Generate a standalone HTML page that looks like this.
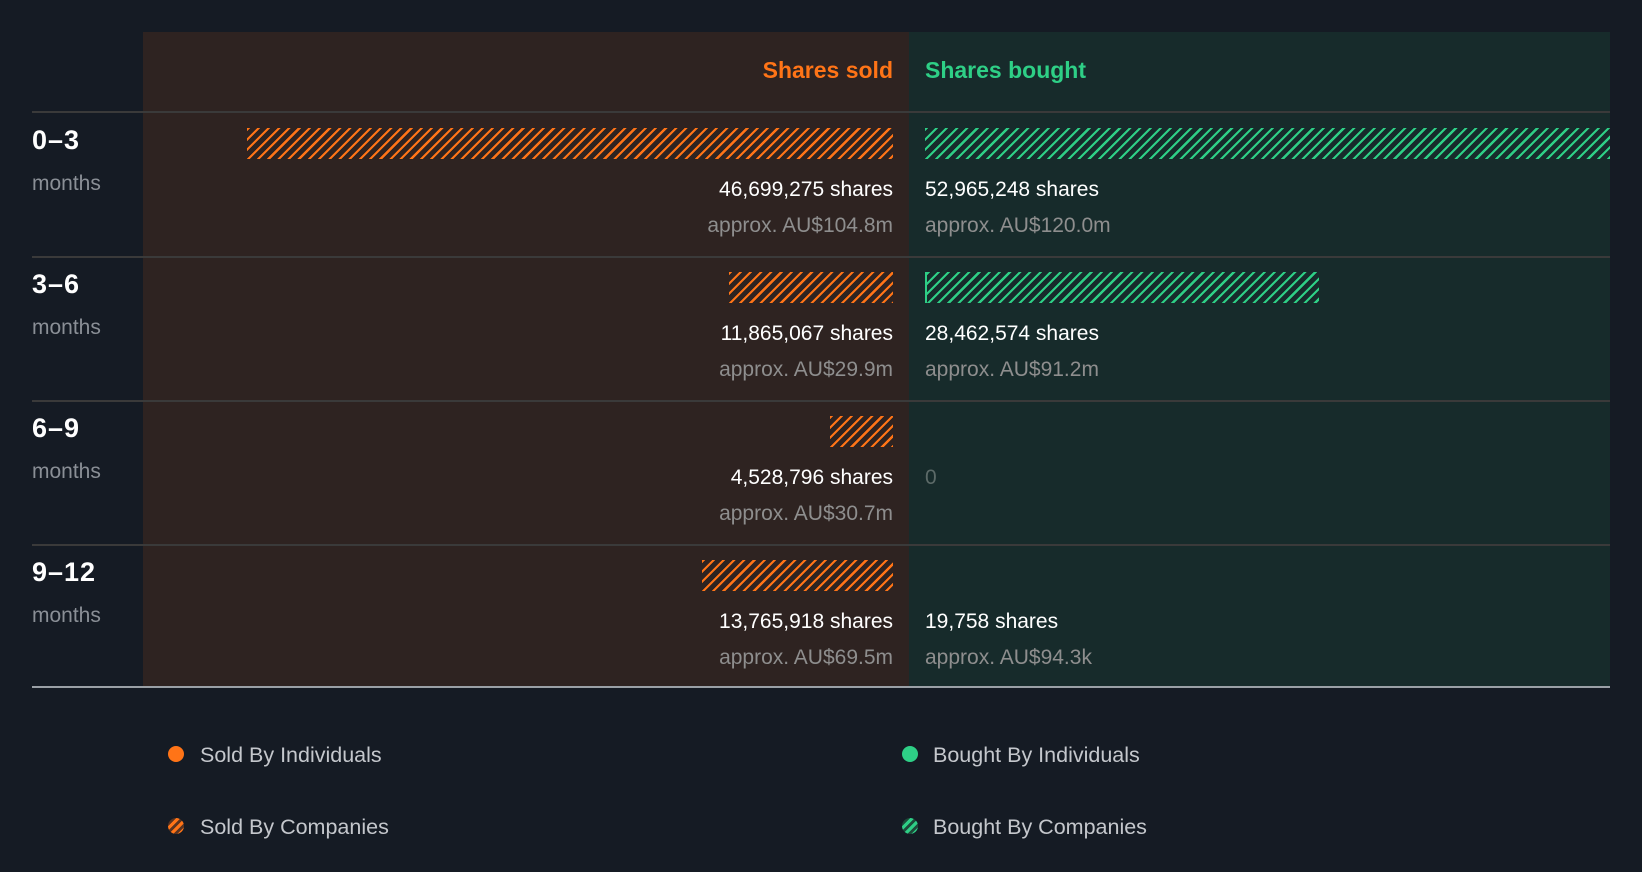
<!DOCTYPE html>
<html><head><meta charset="utf-8"><style>
*{margin:0;padding:0;box-sizing:border-box}
body{width:1642px;height:872px;background:#151b24;font-family:"Liberation Sans",Roboto,sans-serif;position:relative;overflow:hidden}
.a{position:absolute}
.l{background:#2e2321}
.r{background:#172b2b}
.o{background:repeating-linear-gradient(135deg,#ff7417 0 2.2px,transparent 2.2px 7.2px)}
.g{background:repeating-linear-gradient(135deg,#2ecf86 0 2.2px,transparent 2.2px 7.2px)}
.t{font-size:21px;color:#fff;white-space:nowrap;line-height:24px}
.s{font-size:21px;color:#8e8e8e;white-space:nowrap;line-height:24px}
.rt{right:749px;text-align:right}
.lt{left:925px}
.h{font-weight:bold;font-size:27px;color:#fff;left:32px;letter-spacing:1px}
.m{font-size:21px;color:#8a8f96;left:32px}
.line{height:2px;background:#3a3a3a;left:32px;width:1578px}
.lg{font-size:21.5px;color:#c4c7cc}
</style></head><body>
<div class="a l" style="left:143px;top:32px;width:766px;height:655px"></div>
<div class="a r" style="left:909px;top:32px;width:701px;height:655px"></div>
<div class="a" style="right:749px;top:57px;font-size:23px;font-weight:bold;color:#ff7417">Shares sold</div>
<div class="a" style="left:925px;top:57px;font-size:23px;font-weight:bold;color:#2ecf86">Shares bought</div>

<div class="a line" style="top:111px"></div>
<div class="a line" style="top:256px"></div>
<div class="a line" style="top:400px"></div>
<div class="a line" style="top:544px"></div>
<div class="a" style="left:32px;top:686px;width:1578px;height:2px;background:#9aa0a6"></div>

<div class="a h" style="top:125px">0–3</div>
<div class="a m" style="top:172px">months</div>
<div class="a o" style="left:247px;top:128px;width:646px;height:31px"></div>
<div class="a g" style="left:925px;top:128px;width:685px;height:31px"></div>
<div class="a t rt" style="top:178px">46,699,275 shares</div>
<div class="a s rt" style="top:214px">approx. AU$104.8m</div>
<div class="a t lt" style="top:178px">52,965,248 shares</div>
<div class="a s lt" style="top:214px">approx. AU$120.0m</div>

<div class="a h" style="top:269px">3–6</div>
<div class="a m" style="top:316px">months</div>
<div class="a o" style="left:729px;top:272px;width:164px;height:31px"></div>
<div class="a g" style="left:925px;top:272px;width:394px;height:31px;border-left:2px solid #2ecf86"></div>
<div class="a t rt" style="top:322px">11,865,067 shares</div>
<div class="a s rt" style="top:358px">approx. AU$29.9m</div>
<div class="a t lt" style="top:322px">28,462,574 shares</div>
<div class="a s lt" style="top:358px">approx. AU$91.2m</div>

<div class="a h" style="top:413px">6–9</div>
<div class="a m" style="top:460px">months</div>
<div class="a o" style="left:830px;top:416px;width:63px;height:31px"></div>
<div class="a t rt" style="top:466px">4,528,796 shares</div>
<div class="a s rt" style="top:502px">approx. AU$30.7m</div>
<div class="a lt" style="top:466px;font-size:21px;color:#5c6a68">0</div>

<div class="a h" style="top:557px">9–12</div>
<div class="a m" style="top:604px">months</div>
<div class="a o" style="left:702px;top:560px;width:191px;height:31px"></div>
<div class="a t rt" style="top:610px">13,765,918 shares</div>
<div class="a s rt" style="top:646px">approx. AU$69.5m</div>
<div class="a t lt" style="top:610px">19,758 shares</div>
<div class="a s lt" style="top:646px">approx. AU$94.3k</div>

<div class="a" style="left:168px;top:746px;width:16px;height:16px;border-radius:50%;background:#ff7417"></div>
<div class="a lg" style="left:200px;top:743px">Sold By Individuals</div>
<div class="a" style="left:168px;top:818px;width:16px;height:16px;border-radius:50%;background:repeating-linear-gradient(135deg,#ff7417 0 3px,#5a3320 3px 6px)"></div>
<div class="a lg" style="left:200px;top:815px">Sold By Companies</div>
<div class="a" style="left:902px;top:746px;width:16px;height:16px;border-radius:50%;background:#2ecf86"></div>
<div class="a lg" style="left:933px;top:743px">Bought By Individuals</div>
<div class="a" style="left:902px;top:818px;width:16px;height:16px;border-radius:50%;background:repeating-linear-gradient(135deg,#2ecf86 0 3px,#1d4a3a 3px 6px)"></div>
<div class="a lg" style="left:933px;top:815px">Bought By Companies</div>
</body></html>
